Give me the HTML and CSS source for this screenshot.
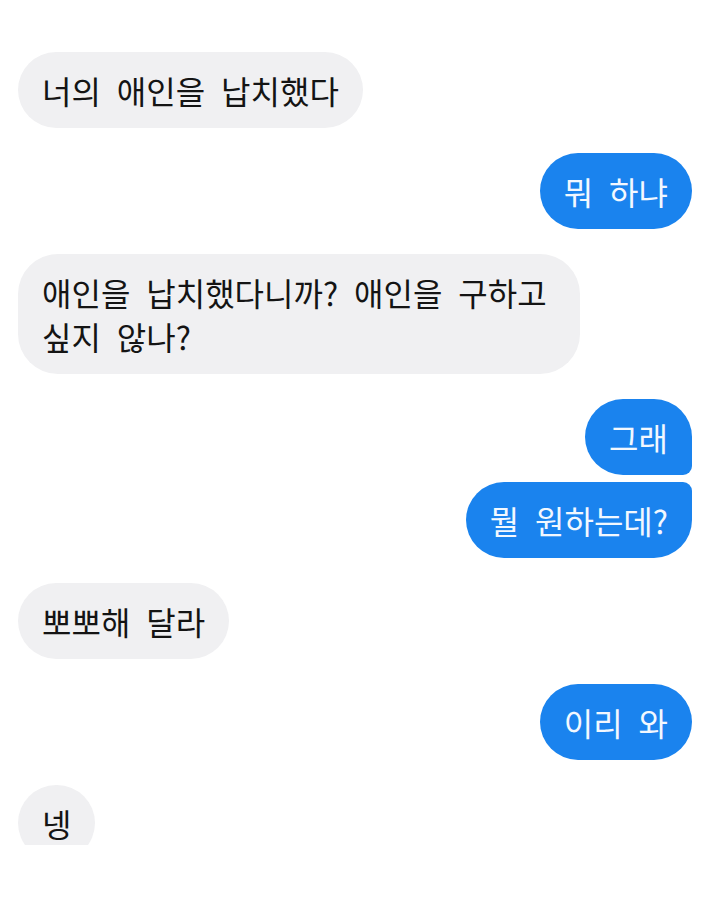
FILE: index.html
```html
<!DOCTYPE html>
<html lang="ko">
<head>
<meta charset="utf-8">
<link rel="stylesheet" href="styles.css">
</head>
<body>
<div class="chat">
  <div class="row left"><div class="bubble in">너의 애인을 납치했다</div></div>
  <div class="row right"><div class="bubble out">뭐 하냐</div></div>
  <div class="row left"><div class="bubble in wide">애인을 납치했다니까? 애인을 구하고<br>싶지 않나?</div></div>
  <div class="group">
    <div class="row right"><div class="bubble out first">그래</div></div>
    <div class="row right"><div class="bubble out last">뭘 원하는데?</div></div>
  </div>
  <div class="row left"><div class="bubble in">뽀뽀해 달라</div></div>
  <div class="row right"><div class="bubble out">이리 와</div></div>
  <div class="row left"><div class="bubble in">넹</div></div>
</div>
</body>
</html>
```
FILE: styles.css
```css
html, body {
  margin: 0;
  padding: 0;
  background: #ffffff;
}
body {
  font-family: "Noto Sans CJK KR", "Noto Sans", sans-serif;
}
.chat {
  height: 845px;
  overflow: hidden;
  box-sizing: border-box;
  padding: 52px 22px 0 18px;
  display: flex;
  flex-direction: column;
  gap: 25px;
}
.group {
  display: flex;
  flex-direction: column;
  gap: 7px;
}
.row {
  display: flex;
}
.row.left { justify-content: flex-start; }
.row.right { justify-content: flex-end; }
.bubble {
  font-size: 32px;
  line-height: 44px;
  word-spacing: 7px;
  padding: 16px 24px;
  border-radius: 38px;
  box-sizing: border-box;
  white-space: nowrap;
}
.bubble.in {
  background: #f0f0f2;
  color: #141414;
}
.bubble.out {
  background: #1a83ee;
  color: #f2f8ff;
}
.bubble.first {
  border-bottom-right-radius: 9px;
}
.bubble.last {
  border-top-right-radius: 9px;
}
.bubble.wide {
  padding-right: 33px;
  border-radius: 40px;
}
```
